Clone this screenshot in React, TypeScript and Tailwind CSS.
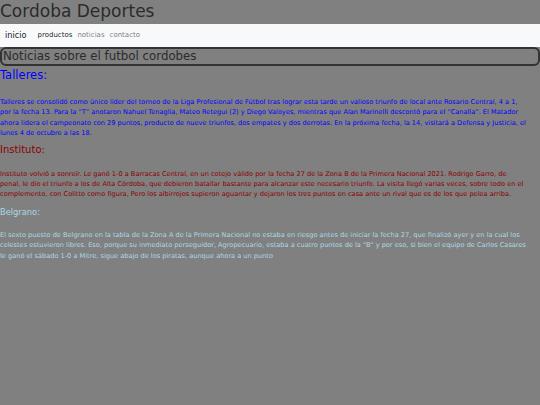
import React from "react";

const noticias = [
  {
    titulo: "Talleres:",
    tituloClass: "text-[11.5px] leading-[16px] text-[#0000ff] mt-[1px]",
    textoClass: "text-[#0000ff] mt-[14px]",
    lineas: [
      "Talleres se consolidó como único líder del torneo de la Liga Profesional de Fútbol tras lograr esta tarde un valioso triunfo de local ante Rosario Central, 4 a 1,",
      "por la fecha 13. Para la “T” anotaron Nahuel Tenaglia, Mateo Retegui (2) y Diego Valoyes, mientras que Alan Marinelli descontó para el “Canalla”. El Matador",
      "ahora lidera el campeonato con 29 puntos, producto de nueve triunfos, dos empates y dos derrotas. En la próxima fecha, la 14, visitará a Defensa y Justicia, el",
      "lunes 4 de octubre a las 18.",
    ],
  },
  {
    titulo: "Instituto:",
    tituloClass: "text-[10px] leading-[14px] text-[#8b0000] mt-[4px]",
    textoClass: "text-[#8b0000] mt-[12px]",
    lineas: [
      "Instituto volvió a sonreír. Le ganó 1-0 a Barracas Central, en un cotejo válido por la fecha 27 de la Zona B de la Primera Nacional 2021. Rodrigo Garro, de",
      "penal, le dio el triunfo a los de Alta Córdoba, que debieron batallar bastante para alcanzar este necesario triunfo. La visita llegó varias veces, sobre todo en el",
      "complemento, con Colitto como figura, Pero los albirrojos supieron aguantar y dejaron los tres puntos en casa ante un rival que es de los que pelea arriba.",
    ],
  },
  {
    titulo: "Belgrano:",
    tituloClass: "text-[8.3px] leading-[12px] text-[#add8e6] mt-[6px]",
    textoClass: "text-[#add8e6] mt-[12px]",
    lineas: [
      "El sexto puesto de Belgrano en la tabla de la Zona A de la Primera Nacional no estaba en riesgo antes de iniciar la fecha 27, que finalizó ayer y en la cual los",
      "celestes estuvieron libres. Eso, porque su inmediato perseguidor, Agropecuario, estaba a cuatro puntos de la \"B\" y por eso, si bien el equipo de Carlos Casares",
      "le ganó el sábado 1-0 a Mitre, sigue abajo de los piratas, aunque ahora a un punto",
    ],
  },
];

export default function App() {
  return (
    <div className="min-h-screen bg-[#808080] font-['DejaVu_Sans',sans-serif]">
      <h1 className="h-[24px] text-[17px] leading-[22px] text-[#2b2b2b]">Cordoba Deportes</h1>

      {/* navbar */}
      <nav className="h-[23px] bg-[#f8f9fa] flex items-center pl-[5px]">
        <span className="text-[8.2px] text-[#212529] mr-[11px]">inicio</span>
        <div className="flex items-center gap-[5px] text-[7px]">
          <a className="text-black/90">productos</a>
          <a className="text-black/55">noticias</a>
          <a className="text-black/55">contacto</a>
        </div>
      </nav>

      <h2 className="h-[19px] border-2 border-[#333] rounded-[6px] text-[11.8px] leading-[15px] pl-[1px] text-[#2b2b2b]">
        Noticias sobre el futbol cordobes
      </h2>

      {noticias.map((n, i) => (
        <section key={i}>
          <h3 className={n.tituloClass}>{n.titulo}</h3>
          <p className={`text-[6.6px] leading-[10.4px] whitespace-nowrap overflow-hidden ${n.textoClass}`}>
            {n.lineas.map((l, j) => (
              <React.Fragment key={j}>
                {l}
                {j < n.lineas.length - 1 && <br />}
              </React.Fragment>
            ))}
          </p>
        </section>
      ))}
    </div>
  );
}
